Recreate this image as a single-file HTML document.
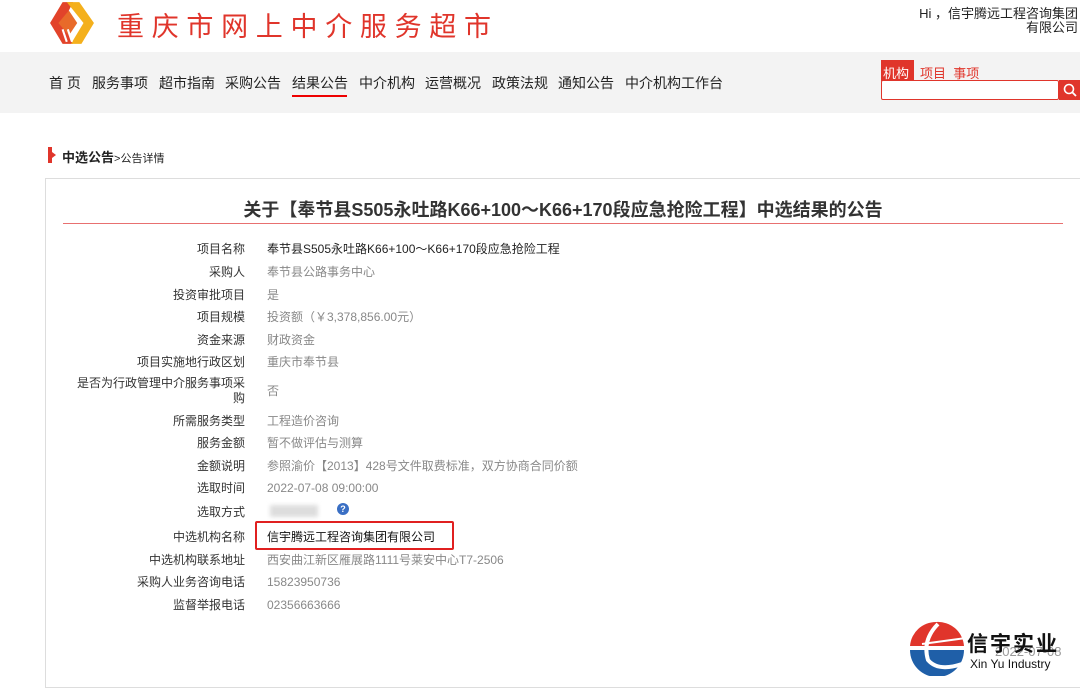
<!DOCTYPE html>
<html><head><meta charset="utf-8"><style>
*{margin:0;padding:0;box-sizing:border-box}
body{width:1080px;height:691px;overflow:hidden;background:#fff;font-family:"Liberation Sans","Noto Sans CJK SC",sans-serif;position:relative;color:#333}
.a{position:absolute;white-space:nowrap}
.nav{position:absolute;left:0;top:52px;width:1080px;height:61px;background:#f3f3f3}
.nav span{position:absolute;top:21px;font-size:14px;color:#222}
.lab{position:absolute;right:835px;font-size:12px;line-height:16px;color:#333;text-align:right;white-space:nowrap}
.val{position:absolute;left:267px;font-size:12px;line-height:16px;color:#888;white-space:nowrap}
</style></head><body>
<svg class="a" style="left:47px;top:0px" width="50" height="46" viewBox="0 0 46 44">
<path d="M2 22 L14 2 L24 2 L14 22 L24 42 L14 42 Z" fill="#e2432a"/>
<path d="M18 2 L30 2 L44 22 L32 42 L22 42 L34 22 Z" fill="#f4b01c"/>
<path d="M10 22 L20 10 L28 22 L20 34 Z" fill="#e86a2a"/>
<path d="M14 28 L18 40 M19 28 L23 40" stroke="#fff" stroke-width="2"/>
</svg>
<div class="a" style="left:117px;top:5px;font-size:27px;color:#e0352b;letter-spacing:7.7px">重庆市网上中介服务超市</div>
<div class="a" style="right:2px;top:7px;font-size:13px;color:#222;text-align:right;line-height:14px">Hi ，信宇腾远工程咨询集团<br>有限公司</div>
<div class="nav">
<span style="left:49px">首 页</span><span style="left:92px">服务事项</span><span style="left:159px">超市指南</span><span style="left:225px">采购公告</span><span style="left:292px">结果公告</span><span style="left:359px">中介机构</span><span style="left:425px">运营概况</span><span style="left:492px">政策法规</span><span style="left:558px">通知公告</span><span style="left:625px">中介机构工作台</span>
<div class="a" style="left:292px;top:43px;width:55px;height:2px;background:#e00"></div>
<div class="a" style="left:881px;top:8px;width:33px;height:21px;background:#e0352b;color:#fff;font-size:13px;padding:3px 2px">机构</div>
<div class="a" style="left:920px;top:11px;font-size:13px;color:#e0352b">项目&nbsp; 事项</div>
<div class="a" style="left:881px;top:28px;width:178px;height:20px;border:1px solid #e0352b;background:#fff;border-radius:2px"></div>
<div class="a" style="left:1059px;top:28px;width:21px;height:20px;background:#e0352b"></div>
<svg class="a" style="left:1063px;top:31px" width="14" height="14"><circle cx="6" cy="6" r="4.5" stroke="#fff" stroke-width="1.6" fill="none"/><path d="M9 9 L13 13" stroke="#fff" stroke-width="1.8"/></svg>
</div>
<div class="a" style="left:48px;top:147px;width:4px;height:16px;background:#e0352b"></div>
<div class="a" style="left:52px;top:152px;border-left:4px solid #e0352b;border-top:3px solid transparent;border-bottom:3px solid transparent"></div>
<div class="a" style="left:62px;top:147px;font-size:13px;color:#222"><b>中选公告</b><span style="font-size:11px">&gt;公告详情</span></div>
<div class="a" style="left:45px;top:178px;width:1040px;height:510px;border:1px solid #ddd;border-right:none"></div>
<div class="a" style="left:63px;top:198px;width:1000px;text-align:center;font-size:18px;line-height:24px;font-weight:bold;color:#333">关于【奉节县S505永吐路K66+100～K66+170段应急抢险工程】中选结果的公告</div>
<div class="a" style="left:63px;top:223px;width:1000px;height:1px;background:#e87070"></div>
<div class="lab" style="top:241px">项目名称</div><div class="val" style="top:241px;color:#222">奉节县S505永吐路K66+100～K66+170段应急抢险工程</div>
<div class="lab" style="top:264px">采购人</div><div class="val" style="top:264px">奉节县公路事务中心</div>
<div class="lab" style="top:287px">投资审批项目</div><div class="val" style="top:287px">是</div>
<div class="lab" style="top:309px">项目规模</div><div class="val" style="top:309px">投资额（￥3,378,856.00元）</div>
<div class="lab" style="top:332px">资金来源</div><div class="val" style="top:332px">财政资金</div>
<div class="lab" style="top:354px">项目实施地行政区划</div><div class="val" style="top:354px">重庆市奉节县</div>
<div class="lab" style="top:376px;line-height:15px">是否为行政管理中介服务事项采<br>购</div><div class="val" style="top:383px">否</div>
<div class="lab" style="top:413px">所需服务类型</div><div class="val" style="top:413px">工程造价咨询</div>
<div class="lab" style="top:435px">服务金额</div><div class="val" style="top:435px">暂不做评估与测算</div>
<div class="lab" style="top:458px">金额说明</div><div class="val" style="top:458px">参照渝价【2013】428号文件取费标准，双方协商合同价额</div>
<div class="lab" style="top:480px">选取时间</div><div class="val" style="top:480px">2022-07-08 09:00:00</div>
<div class="lab" style="top:504px">选取方式</div>
<div class="a" style="left:270px;top:505px;width:48px;height:12px;background:#ddd;filter:blur(2px)"></div>
<div class="a" style="left:337px;top:503px;width:12px;height:12px;border-radius:50%;background:#3a6fc4;color:#fff;font-size:9px;text-align:center;line-height:12px;font-weight:bold">?</div>
<div class="lab" style="top:529px">中选机构名称</div>
<div class="a" style="left:255px;top:521px;width:199px;height:29px;border:2px solid #e02020;border-radius:2px"></div>
<div class="val" style="top:529px;color:#111">信宇腾远工程咨询集团有限公司</div>
<div class="lab" style="top:552px">中选机构联系地址</div><div class="val" style="top:552px">西安曲江新区雁展路1111号莱安中心T7-2506</div>
<div class="lab" style="top:574px">采购人业务咨询电话</div><div class="val" style="top:574px">15823950736</div>
<div class="lab" style="top:597px">监督举报电话</div><div class="val" style="top:597px">02356663666</div>
<div class="a" style="left:995px;top:644px;font-size:13px;color:#999">2022-07-08</div>
<svg class="a" style="left:908px;top:620px" width="58" height="56" viewBox="0 0 58 56">
<path d="M28 2 A26 26 0 0 0 2 26 L56 26 A26 26 0 0 0 28 2Z" fill="#e0352b"/>
<path d="M2 30 A26 26 0 0 0 56 30 Z" fill="#1f5fa8"/>
<path d="M30 4 Q14 20 20 40 Q30 52 54 44" stroke="#fff" stroke-width="4" fill="none"/>
<path d="M14 24 L58 18" stroke="#fff" stroke-width="2"/>
</svg>
<div class="a" style="left:967px;top:628px;font-size:21px;font-weight:bold;color:#111;letter-spacing:2px">信宇实业</div>
<div class="a" style="left:970px;top:657px;font-size:12px;color:#111">Xin Yu Industry</div>
</body></html>
